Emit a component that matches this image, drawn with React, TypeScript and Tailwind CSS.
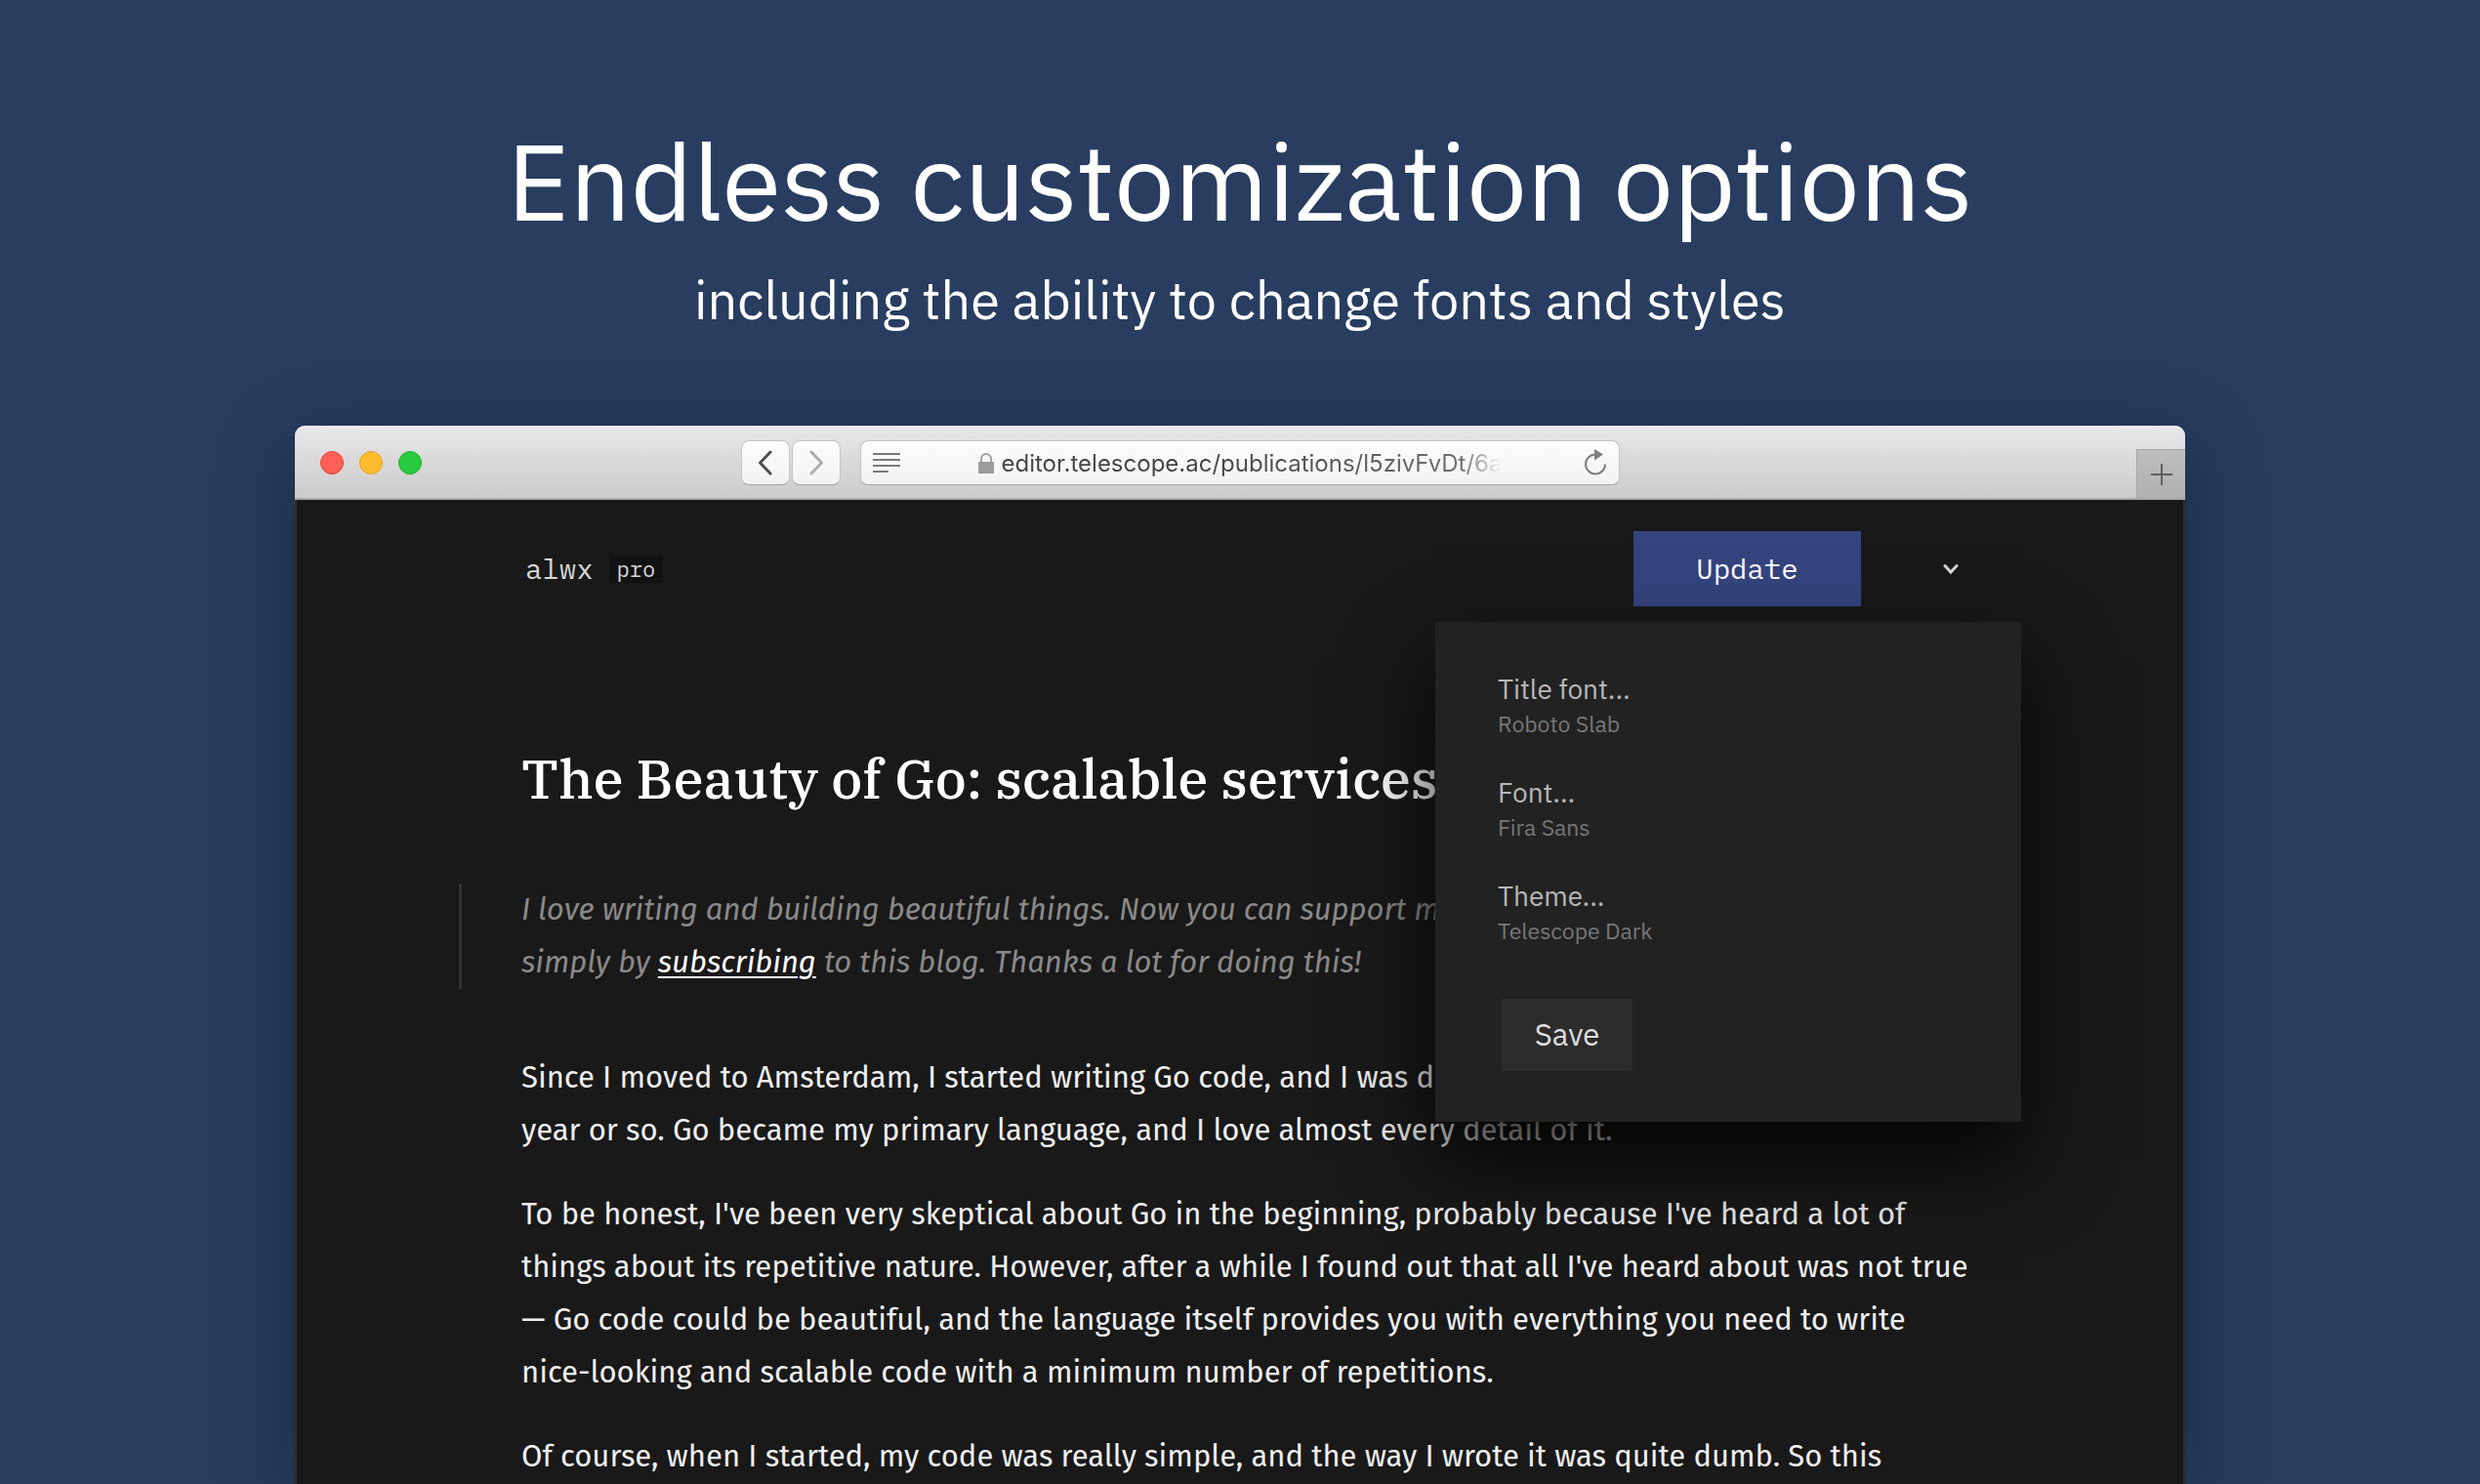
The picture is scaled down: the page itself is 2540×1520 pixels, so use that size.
const settings = [
  { label: "Title font...", value: "Roboto Slab" },
  { label: "Font...", value: "Fira Sans" },
  { label: "Theme...", value: "Telescope Dark" },
];

const TitleBar = () => {
  return (
    <div className="grid grid-cols-[1fr_778px_1fr] items-center h-[76px] rounded-t-[10px] bg-linear-to-b from-[#e9e7e9] to-[#cbcbcb] border-t-2 border-t-[#f6f5f6] border-b-2 border-b-[#a9a9a9]">
      <div className="flex items-center justify-between pl-[26px] pr-5">
        <div className="flex gap-4">
          <button aria-label="Close" className="size-6 rounded-full bg-[#ff5f57] border border-[#e2463f]" />
          <button aria-label="Minimize" className="size-6 rounded-full bg-[#ffbd2e] border border-[#e0a028]" />
          <button aria-label="Zoom" className="size-6 rounded-full bg-[#28cb40] border border-[#1dad2b]" />
        </div>
        <div className="flex gap-0.5">
          <button
            aria-label="Back"
            className="flex items-center justify-center w-[50px] h-[46px] rounded-lg bg-linear-to-b from-[#fdfdfd] to-[#f2f2f2] border border-[#c4c4c4] border-b-[#a2a2a2]"
          >
            <svg width="16" height="26" viewBox="0 0 16 26" fill="none" stroke="#4d4d4d" strokeWidth="3" strokeLinecap="round" strokeLinejoin="round">
              <path d="M13 2 2.500 13 13 24" />
            </svg>
          </button>
          <button
            aria-label="Forward"
            className="flex items-center justify-center w-[50px] h-[46px] rounded-lg bg-linear-to-b from-[#fdfdfd] to-[#f2f2f2] border border-[#c4c4c4] border-b-[#a2a2a2]"
          >
            <svg width="16" height="26" viewBox="0 0 16 26" fill="none" stroke="#adadad" strokeWidth="3" strokeLinecap="round" strokeLinejoin="round">
              <path d="M3 2 13.500 13 3 24" />
            </svg>
          </button>
        </div>
      </div>

      <div className="flex items-center justify-between h-[46px] px-3 rounded-lg bg-linear-to-b from-[#fdfdfd] to-[#f2f2f2] border border-[#c4c4c4] border-b-[#a2a2a2]">
        <button aria-label="Reader">
          <svg width="28" height="20" viewBox="0 0 28 20" fill="#7a7a7a">
            <path d="M0 0h28v2H0zM0 6h28v2H0zM0 12h28v2H0zM0 18h16v2H0z" />
          </svg>
        </button>
        <div className="flex items-center gap-2 pt-0.5 pr-1">
          <svg width="16" height="22" viewBox="0 0 16 22">
            <path d="M3 10V6a5 5 0 0 1 10 0v4" fill="none" stroke="#a0a0a0" strokeWidth="2" />
            <rect y="9" width="16" height="12" fill="#9c9c9c" />
          </svg>
          <span className="font-['Inter','Liberation_Sans',sans-serif] text-2xl whitespace-nowrap bg-linear-to-r from-[#444444] from-40% via-[#6e6e6e] via-92% to-[#f8f8f8] bg-clip-text text-transparent">
            editor.telescope.ac/publications/l5zivFvDt/6a
          </span>
        </div>
        <button aria-label="Reload">
          <svg width="24" height="28" viewBox="0 0 24 28">
            <path d="M12 5.500A10 10 0 1 0 22 15.500" fill="none" stroke="#7f7f7f" strokeWidth="2" />
            <path d="M11 0 20 5.500 11 11.500z" fill="#7f7f7f" />
          </svg>
        </button>
      </div>

      <button
        aria-label="New tab"
        className="flex items-center justify-center self-end justify-self-end w-[50px] h-[50px] bg-linear-to-b from-[#bebebe] to-[#b0b0b0] border-t border-l border-[#a6a6a6]"
      >
        <svg width="22" height="22" viewBox="0 0 22 22" fill="#606060">
          <path d="M10 0h2v10h10v2H12v10h-2V12H0v-2h10z" />
        </svg>
      </button>
    </div>
  );
};

const SettingsMenu = () => {
  return (
    <div className="absolute top-full -right-16 mt-4 w-[600px] pt-[50px] px-16 pb-13 bg-[#222222] shadow-[0_40px_80px_rgba(0,0,0,0.85)] z-10 font-['IBM_Plex_Sans','Open_Sans',sans-serif]">
      <div className="flex flex-col items-start gap-9">
        {settings.map((item) => (
          <button key={item.label} className="text-left">
            <span className="block text-[28px] leading-[38px] text-[#b8b8b8]">{item.label}</span>
            <span className="block text-[23px] leading-8 text-[#787878]">{item.value}</span>
          </button>
        ))}
      </div>
      <button className="mt-[54px] ml-1 w-[134px] h-[74px] bg-[#2c2c2c] text-[31px] text-[#dedede]">
        Save
      </button>
    </div>
  );
};

const EditorHeader = () => {
  return (
    <header className="relative flex items-center justify-between font-['IBM_Plex_Mono','Liberation_Mono',monospace]">
      <div className="flex items-center gap-4 pl-1">
        <span className="text-[29px] text-[#d8d8d8]">alwx</span>
        <span className="px-2 bg-[#121212] text-[22px] leading-7 text-[#d8d8d8]">pro</span>
      </div>
      <div className="flex items-center">
        <button className="w-[233px] h-[77px] bg-[#34447e] text-[29px] text-white">Update</button>
        <button aria-label="Toggle menu" className="ml-[84px]">
          <svg width="16" height="12" viewBox="0 0 16 12" fill="none" stroke="#d6d6d6" strokeWidth="3" strokeLinecap="round">
            <path d="M2 2.500 8 9l6-6.500" />
          </svg>
        </button>
      </div>
      <SettingsMenu />
    </header>
  );
};

const Article = () => {
  return (
    <article className="font-['Fira_Sans','Open_Sans',sans-serif] text-[31px] leading-[54px] text-[#eeeeee] whitespace-nowrap">
      <h1 className="mt-[140px] font-['Roboto_Slab','IBM_Plex_Serif','DejaVu_Serif_Condensed',serif] font-medium text-[56px] leading-[72px] text-white">
        The Beauty of Go: scalable services
      </h1>
      <blockquote className="mt-[72px] -ml-16 pl-[61px] border-l-3 border-[#333333] italic text-[#8a8a8a]">
        I love writing and building beautiful things. Now you can support me
        <br />
        simply by{" "}
        <a href="#subscribe" className="text-white underline decoration-2 underline-offset-4">
          subscribing
        </a>{" "}
        to this blog. Thanks a lot for doing this!
      </blockquote>
      <div className="flex flex-col gap-8 mt-16">
        <p>
          Since I moved to Amsterdam, I started writing Go code, and I was doing
          <br />
          year or so. Go became my primary language, and I love almost every detail of it.
        </p>
        <p>
          To be honest, I've been very skeptical about Go in the beginning, probably because I've heard a lot of
          <br />
          things about its repetitive nature. However, after a while I found out that all I've heard about was not true
          <br />
          — Go code could be beautiful, and the language itself provides you with everything you need to write
          <br />
          nice-looking and scalable code with a minimum number of repetitions.
        </p>
        <p>Of course, when I started, my code was really simple, and the way I wrote it was quite dumb. So this</p>
      </div>
    </article>
  );
};

const App = () => {
  return (
    <div className="flex flex-col h-screen overflow-hidden bg-[#283d60] font-['IBM_Plex_Sans','Open_Sans',sans-serif]">
      <div className="pt-[119px] text-center text-white">
        <h2 className="text-[110px] leading-[132px]">Endless customization options</h2>
        <p className="mt-5 text-[54px] leading-[72px]">including the ability to change fonts and styles</p>
      </div>
      <main className="flex flex-col flex-1 w-full max-w-[1936px] mx-auto mt-[93px] rounded-t-[10px] shadow-[0_20px_80px_rgba(0,0,0,0.35)]">
        <TitleBar />
        <div className="flex-1 pt-8 px-[230px] bg-[#191919] border-x-2 border-[#2d2d2d]">
          <EditorHeader />
          <Article />
        </div>
      </main>
    </div>
  );
};

export default App;
